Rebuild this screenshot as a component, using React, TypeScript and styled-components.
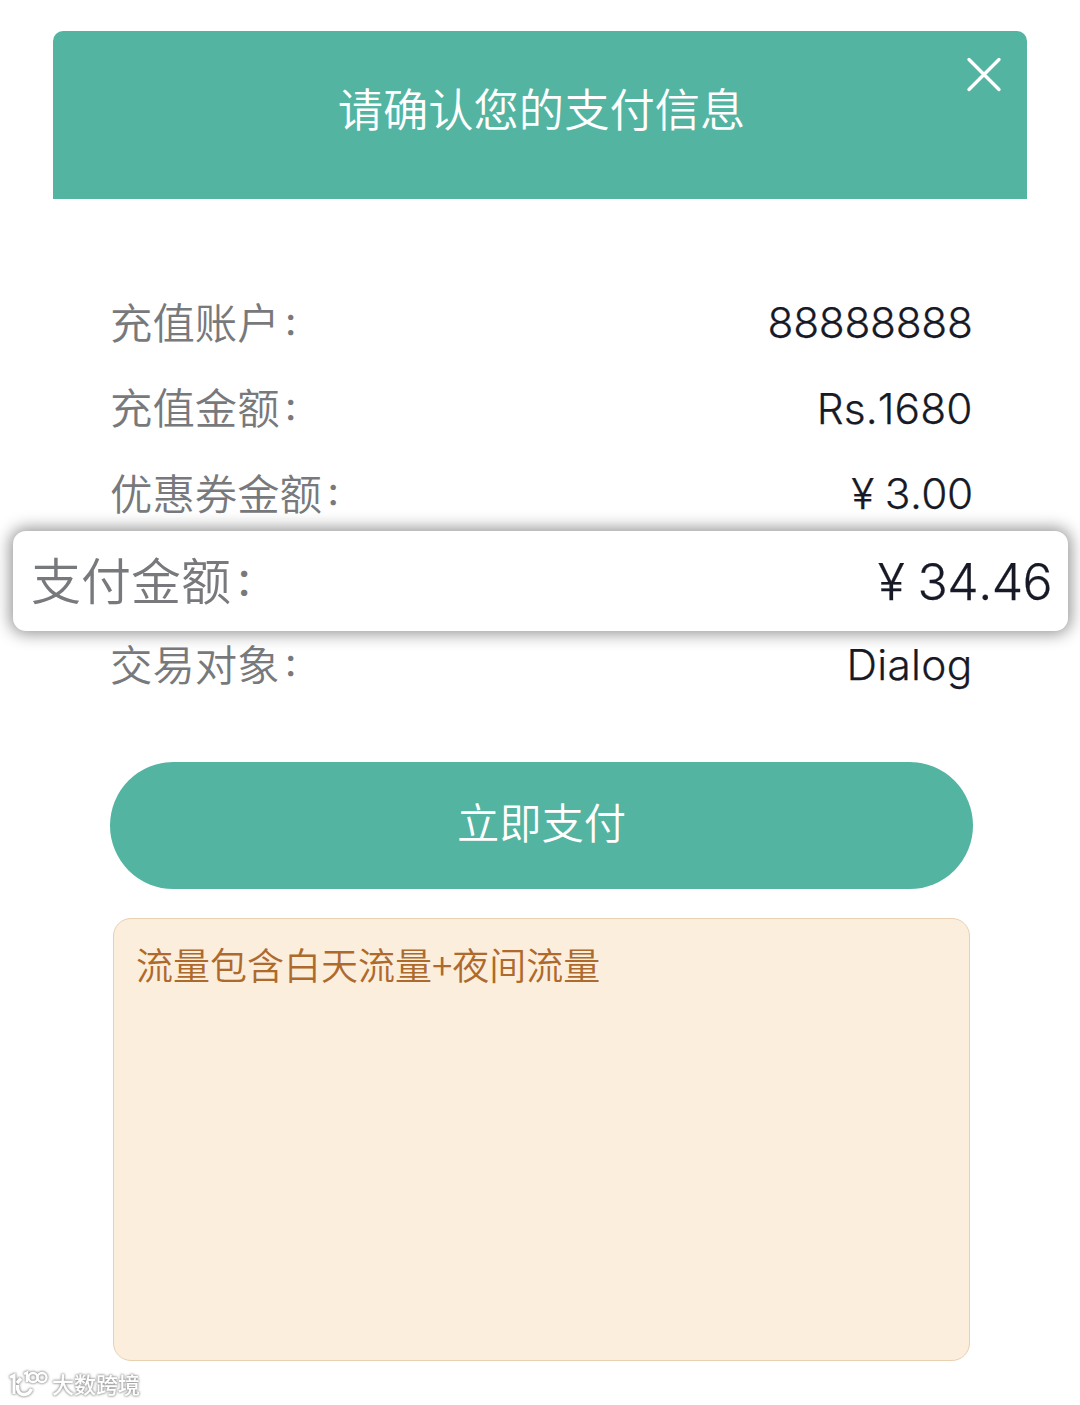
import styled, { createGlobalStyle } from "styled-components";

const GlobalStyle = createGlobalStyle`
    body {
        margin: 0;
        background-color: white;
        font-family: Inter, "Noto Sans CJK SC", sans-serif;
        font-weight: 350;
    }
`;

const Page = styled.div`
    box-sizing: border-box;
    width: 1080px;
    height: 1405px;
    padding-top: 31px;
    display: flex;
    flex-direction: column;
    overflow: hidden;
`;

const Header = styled.div`
    position: relative;
    box-sizing: border-box;
    height: 168px;
    margin: 0 53px;
    padding: 46px 0 0 3px;
    border-radius: 10px 10px 0 0;
    background-color: #52b4a1;
    color: white;
    text-align: center;
    font-size: 45.3px;
    line-height: 68px;
`;

const CloseButton = styled.button`
    position: absolute;
    top: 22px;
    right: 22px;
    width: 42px;
    height: 42px;
    padding: 0;
    border: none;
    background: none;
`;

const InfoList = styled.div`
    margin-top: 82px;
    padding: 0 107.5px 0 110px;
    display: flex;
    flex-direction: column;
`;

const InfoRow = styled.div<{ $highlighted: boolean }>`
    position: relative;
    z-index: ${(props) => (props.$highlighted ? 1 : 0)};
    box-sizing: border-box;
    display: flex;
    justify-content: space-between;
    align-items: center;
    height: ${(props) => (props.$highlighted ? "100px" : "85.4px")};
    margin: ${(props) => (props.$highlighted ? "-6px -95.5px -8.6px -97px" : "0")};
    padding: ${(props) => (props.$highlighted ? "2px 16px 0 18px" : "1px 0 0")};
    border-radius: 13px;
    background-color: ${(props) => (props.$highlighted ? "white" : "transparent")};
    box-shadow: ${(props) => (props.$highlighted ? "0 0 16px 3px rgba(0, 0, 0, 0.42)" : "none")};
    font-size: ${(props) => (props.$highlighted ? "50px" : "42.4px")};
`;

const Label = styled.span`
    color: #77797c;
    line-height: 1;
`;

const Colon = styled.span`
    margin-left: 0.1em;
    font-size: 0.75em;
    font-weight: 500;
    line-height: 1;
    vertical-align: 0.14em;
`;

const Value = styled.span<{ $tracking?: number }>`
    margin-bottom: 1px;
    color: #171a26;
    line-height: 1;
    letter-spacing: ${(props) => props.$tracking ?? -0.3}px;
    font-kerning: none;
    -webkit-text-stroke: 0.25px #171a26;
`;

const PayButton = styled.button`
    height: 127px;
    margin: 54px 107px 0 110px;
    padding: 0 0 9px;
    border: none;
    border-radius: 64px;
    background-color: #52b4a1;
    color: white;
    font-family: inherit;
    font-weight: inherit;
    font-size: 42.3px;
`;

const Note = styled.div`
    box-sizing: border-box;
    height: 443px;
    margin: 29px 110px 0 113px;
    padding: 18px 22px;
    border: 1.5px solid #e8d0b2;
    border-radius: 18px;
    background-color: #fceedd;
    color: #ad6a2c;
    font-family: "Noto Sans CJK SC", sans-serif;
    font-size: 37px;
    line-height: 54px;
`;

const Watermark = styled.div`
    display: flex;
    align-items: center;
    gap: 4px;
    height: 34px;
    margin: 7px 0 0 8px;
    color: white;
    font-size: 22px;
    font-weight: 500;
    line-height: 34px;
    filter: drop-shadow(0 0 1px #999) drop-shadow(0 0 1px #aaa);
`;

const WatermarkLogo = styled.svg`
    width: 40px;
    height: 30px;
`;

const rows = [
    { label: "充值账户", value: "88888888" },
    { label: "充值金额", value: "Rs.1680", tracking: 0.1 },
    { label: "优惠券金额", value: "¥ 3.00", tracking: -0.6 },
    { label: "支付金额", value: "¥ 34.46", tracking: -0.6, highlighted: true },
    { label: "交易对象", value: "Dialog", tracking: 0.3 },
];

const App = () => {
    return (
        <>
            <GlobalStyle />
            <Page>
                <Header>
                    请确认您的支付信息
                    <CloseButton aria-label="关闭">
                        <svg width="42" height="42" viewBox="0 0 42 42">
                            <path
                                d="M6 6.5L36 36.5M36 6.5L6 36.5"
                                stroke="white"
                                strokeWidth="3.4"
                                strokeLinecap="round"
                            />
                        </svg>
                    </CloseButton>
                </Header>
                <InfoList>
                    {rows.map((row) => (
                        <InfoRow key={row.label} $highlighted={!!row.highlighted}>
                            <Label>
                                {row.label}
                                <Colon>：</Colon>
                            </Label>
                            <Value $tracking={row.tracking}>{row.value}</Value>
                        </InfoRow>
                    ))}
                </InfoList>
                <PayButton>立即支付</PayButton>
                <Note>流量包含白天流量+夜间流量</Note>
                <Watermark>
                    <WatermarkLogo viewBox="0 0 40 30" fill="none" stroke="white">
                        <path d="M2 7.5L6 5.5V24" strokeWidth="3" />
                        <path d="M13 8.5L9 13M9.5 15Q9 24.5 16 24.5Q21 24.5 23.5 19" strokeWidth="3.4" />
                        <path d="M16 4L19 2.5V12" strokeWidth="2.5" />
                        <circle cx="25" cy="7.5" r="4.5" strokeWidth="2.3" />
                        <circle cx="34" cy="7.5" r="4.5" strokeWidth="2.3" />
                    </WatermarkLogo>
                    大数跨境
                </Watermark>
            </Page>
        </>
    );
};

export default App;
